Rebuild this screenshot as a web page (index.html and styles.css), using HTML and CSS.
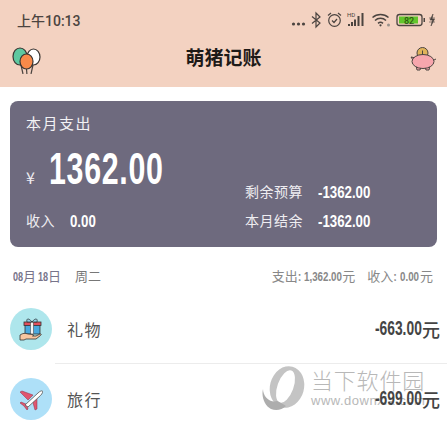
FILE: index.html

```html
<!DOCTYPE html>
<html>
<head>
<meta name="viewport" content="width=device-width, initial-scale=1.0">
<title>萌猪记账</title>
<link rel="stylesheet" href="styles.css">
</head>
<body>
<div class="top_area">
	<div class="status_bar">
		<span class="status_time">上午10:13</span>
		<svg class="status_icons" width="146" height="18" viewBox="0 0 146 18">
			<g fill="#4b4440">
				<circle cx="2.500" cy="13" r="1.600"/><circle cx="7.500" cy="13" r="1.600"/><circle cx="12.500" cy="13" r="1.600"/>
			</g>
			<path d="M21 5.500L29 12l-4 4V2l4 4-8 6.500" fill="none" stroke="#4b4440" stroke-width="1.200"/>
			<g fill="none" stroke="#4b4440" stroke-width="1.200">
				<circle cx="43.500" cy="9.500" r="5.800"/>
				<path d="M41 9.500l2 2 3-3.500M37 4.500l3-2.500M50 4.500l-3-2.500"/>
			</g>
			<text x="56" y="6" class="hd_text">HD</text>
			<g fill="#4b4440">
				<rect x="57" y="13" width="2" height="2"/><rect x="60" y="11" width="2" height="4"/>
				<rect x="63" y="8.500" width="2" height="6.500"/><rect x="66.500" y="5" width="2" height="10"/>
				<rect x="70.500" y="2" width="2" height="13"/>
			</g>
			<g fill="none" stroke="#4b4440" stroke-width="1.500">
				<path d="M81.500 6.500a12 12 0 0 1 16 0M84 9.500a8 8 0 0 1 11 0M87 12.300a4 4 0 0 1 5 0"/>
			</g>
			<circle cx="89.500" cy="14.300" r="1.100" fill="#4b4440"/>
			<circle cx="97.500" cy="14" r="1.500" fill="#9a928c"/>
			<rect x="106" y="3.500" width="25" height="11" rx="2.500" fill="none" stroke="#4b4440" stroke-width="1.300"/>
			<rect x="108" y="5.500" width="19" height="7" fill="#62c52c"/>
			<text x="118" y="12.500" class="batt_text">82</text>
			<rect x="132.500" y="7" width="1.500" height="4" fill="#4b4440"/>
			<path d="M142 3l-3 6h2.500l-1.500 6 3.500-7H141z M138 7h6M138 11h6" fill="#4b4440" stroke="#4b4440" stroke-width=".6"/>
		</svg>
	</div>
	<div class="title_bar">
		<svg width="32" height="32" viewBox="0 0 32 32">
			<g fill="none" stroke="#4b4440" stroke-width="1.200">
				<path d="M11 23l2 9M23 23l-2 9M16.500 27l.5 6"/>
			</g>
			<ellipse cx="10" cy="14.500" rx="7" ry="8.500" fill="#5ec8a0" stroke="#3a3532" stroke-width="1.200"/>
			<ellipse cx="23.500" cy="15" rx="6.500" ry="8" fill="#fff" stroke="#3a3532" stroke-width="1.200"/>
			<ellipse cx="16.500" cy="19.500" rx="6.500" ry="7.500" fill="#f98a4a" stroke="#3a3532" stroke-width="1.200"/>
		</svg>
		<span class="app_title">萌猪记账</span>
		<svg width="32" height="32" viewBox="0 0 32 32">
			<circle cx="17.500" cy="11" r="5.500" fill="#e0b35a" stroke="#4b4440" stroke-width="1"/>
			<path d="M17.500 8.500v5" stroke="#4b4440" stroke-width="1"/>
			<path d="M11 23l1 5h3l1-3h4l1 3h3l1-5z" fill="#f7a6ad" stroke="#4b4440" stroke-width="1"/>
			<path d="M8 18l-2-3 5 1z" fill="#f7a6ad" stroke="#4b4440" stroke-width="1"/>
			<ellipse cx="18" cy="19.500" rx="11" ry="7" fill="#f7a6ad" stroke="#4b4440" stroke-width="1"/>
			<path d="M29 18l2-1" stroke="#4b4440" stroke-width="1"/>
		</svg>
	</div>
</div>

<div class="month_card">
	<div class="card_title">本月支出</div>
	<div class="card_middle">
		<div class="amount_box">
			<span class="yen">¥</span>
			<span class="cond amount">1362.00</span>
		</div>
		<div class="budget_line">
			<span class="card_label">剩余预算</span>
			<span class="cond card_num wide_num">-1362.00</span>
		</div>
	</div>
	<div class="card_bottom">
		<div class="budget_line">
			<span class="card_label">收入</span>
			<span class="cond card_num">0.00</span>
		</div>
		<div class="budget_line">
			<span class="card_label">本月结余</span>
			<span class="cond card_num wide_num">-1362.00</span>
		</div>
	</div>
</div>

<div class="day_header">
	<div class="day_left">
		<span><span class="cond date_num">08</span>月<span class="cond date_num day_gap">18</span>日</span>
		<span class="week_day">周二</span>
	</div>
	<div class="day_right">
		<span>支出:<span class="cond day_num total_num">1,362.00</span>元</span>
		<span>收入:<span class="cond day_num">0.00</span>元</span>
	</div>
</div>

<div class="bill_row">
	<div class="bill_icon icon_gift">
		<svg width="24" height="24" viewBox="0 0 24 24">
			<rect x="6" y="7" width="15" height="10" fill="#49a9df" stroke="#333" stroke-width=".8"/>
			<rect x="5" y="5" width="17" height="3.500" fill="#e2505e" stroke="#333" stroke-width=".8"/>
			<rect x="11.500" y="5" width="3" height="12" fill="#f4f4f4" stroke="#333" stroke-width=".5"/>
			<path d="M13 5C10 1 7 1 8 5zM13 5c3-4 6-4 5 0z" fill="#8fd3ee" stroke="#333" stroke-width=".8"/>
			<path d="M1 18c3-2 5-2 8-1l5 .5c1 .5 .5 1.500-.5 1.500H17l4-2c1.500-.5 1.500 1 .5 1.500L17 22H7l-2 1H1z" fill="#f7c6a0" stroke="#333" stroke-width=".8"/>
		</svg>
	</div>
	<div class="bill_body">
		<span class="bill_name">礼物</span>
		<span class="bill_money"><span class="cond money_num">-663.00</span>元</span>
	</div>
</div>
<div class="bill_row">
	<div class="bill_icon icon_travel">
		<svg width="24" height="24" viewBox="0 0 24 24">
			<path d="M1 5l2-1 11 4-5 5zM18 22l-2 1-3-11 5-3z" fill="#e0566f" stroke="#8a3045" stroke-width=".5"/>
			<path d="M1 16l1-1 5 2 1 1 1 4-1 1-3-4z" fill="#e0566f" stroke="#8a3045" stroke-width=".5"/>
			<path d="M6 18L19 6c2-2 4-2.500 4.500-2s0 2.500-2 4.500L9 20z" fill="#fff" stroke="#555" stroke-width=".8"/>
		</svg>
	</div>
	<div class="bill_body">
		<span class="bill_name">旅行</span>
		<span class="bill_money"><span class="cond money_num">-699.00</span>元</span>
	</div>
</div>

<div class="watermark">
	<svg width="44" height="46" viewBox="0 0 44 46">
		<ellipse cx="25" cy="21" rx="17" ry="21" transform="rotate(15 25 21)" fill="#c4c4c4"/>
		<ellipse cx="23.500" cy="20.500" rx="8" ry="17" transform="rotate(20 23.500 20.500)" fill="#fff"/>
		<path d="M1 23c0 8 7 14 14 12 3 1 6 3 9 5-4 4-10 5-15 3C3 40-1 31 1 23z" fill="#adadad"/>
	</svg>
	<div class="wm_text">
		<div class="wm_name">当下软件园</div>
		<div class="wm_url">www.downxia.com</div>
	</div>
</div>
</body>
</html>
```

FILE: styles.css

```css
html, body {
	margin: 0;
	padding: 0;
}

body {
	position: relative;
	width: 447px;
	height: 432px;
	overflow: hidden;
	background-color: #fff;
	font-family: "Noto Sans CJK SC", "Noto Sans", sans-serif;
}

/* no condensed font here, so numbers get squeezed and their box set by hand */
.cond {
	display: inline-block;
	flex-shrink: 0;
	font-family: "Liberation Sans", sans-serif;
	font-weight: 700;
	white-space: nowrap;
	transform-origin: left center;
}

.top_area {
	height: 87px;
	background-color: #f3d2c1;
}

.status_bar {
	display: flex;
	justify-content: space-between;
	align-items: center;
	height: 40px;
	padding: 0 10px 0 17px;
}

.status_time {
	margin-bottom: 1px;
	font-family: Roboto, "Noto Sans CJK SC", sans-serif;
	font-size: 14px;
	font-weight: 500;
	color: #4b4440;
}

.hd_text {
	font-family: Roboto, sans-serif;
	font-size: 6px;
	fill: #4b4440;
}

.batt_text {
	font-family: Roboto, sans-serif;
	font-size: 9px;
	font-weight: 500;
	text-anchor: middle;
	fill: #2d5a10;
}

.title_bar {
	display: flex;
	justify-content: space-between;
	align-items: center;
	height: 36px;
	padding: 0 10px;
}

.app_title {
	margin-bottom: 3px;
	font-size: 19px;
	font-weight: 700;
	color: #1e1a18;
}

.month_card {
	display: flex;
	flex-direction: column;
	height: 146px;
	box-sizing: border-box;
	margin: 14px 10px 0;
	padding: 11px 67px 0 16px;
	background-color: #6e6a7e;
	border-radius: 8px;
	color: #fff;
}

.card_title {
	font-size: 15px;
	line-height: 22px;
	letter-spacing: 1.500px;
	color: #f2f1f4;
}

.card_middle, .card_bottom {
	display: flex;
	justify-content: space-between;
	align-items: flex-end;
}

.card_middle {
	height: 70px;
}

.card_bottom {
	margin-top: 7px;
}

.amount_box {
	display: flex;
	align-items: baseline;
	gap: 14px;
	align-self: flex-start;
	margin-top: 10px;
}

.yen {
	font-size: 16px;
	color: #eeedf1;
}

.amount {
	width: 113px;
	font-size: 44px;
	line-height: 50px;
	letter-spacing: 1px;
	transform: scaleX(.69);
}

.budget_line {
	display: flex;
	align-items: center;
	gap: 15px;
	line-height: 22px;
}

.card_label {
	margin-bottom: 4px;
	font-size: 14px;
	line-height: 18px;
	letter-spacing: .5px;
	color: #eeedf1;
}

.card_num {
	width: 26px;
	font-size: 17px;
	transform: scaleX(.78);
}

.wide_num {
	width: 52px;
}

.day_header {
	display: flex;
	justify-content: space-between;
	align-items: center;
	height: 20px;
	margin-top: 18px;
	padding: 0 14px 0 13px;
	font-size: 13px;
}

.day_left, .day_right {
	display: flex;
	align-items: center;
}

.day_left {
	gap: 14px;
	color: #77748a;
}

.day_right {
	gap: 12px;
	color: #888;
}

.date_num {
	width: 10px;
	font-size: 13px;
	transform: scaleX(.7);
}

.day_gap {
	margin-left: 2px;
}

.week_day {
	color: #777;
}

.day_num {
	width: 20px;
	margin-left: 3px;
	font-size: 13px;
	transform: scaleX(.75);
}

.total_num {
	width: 38px;
}

.bill_row {
	display: flex;
	align-items: center;
	height: 70px;
	padding-left: 10px;
}

.day_header + .bill_row {
	margin-top: 9px;
}

.bill_icon {
	display: flex;
	justify-content: center;
	align-items: center;
	flex-shrink: 0;
	width: 42px;
	height: 42px;
	border-radius: 50%;
}

.icon_gift {
	background-color: #aee6ec;
}

.icon_travel {
	background-color: #aee0f8;
}

.bill_body {
	display: flex;
	justify-content: space-between;
	align-items: center;
	flex: 1;
	align-self: stretch;
	margin-left: 3px;
	padding: 0 7px 0 12px;
	border-bottom: 1px solid #ececec;
}

.bill_row:last-of-type .bill_body {
	border-bottom: none;
}

.bill_name {
	font-size: 16px;
	letter-spacing: 1.500px;
	color: #555;
}

.bill_money {
	display: flex;
	align-items: center;
	font-size: 18px;
	font-weight: 500;
	color: #444;
}

.money_num {
	width: 47px;
	font-size: 20px;
	transform: scaleX(.69);
}

.watermark {
	position: absolute;
	left: 262px;
	top: 366px;
	z-index: -1;
	display: flex;
	gap: 5px;
	color: #b8b8b8;
}

.wm_name {
	font-size: 22px;
	line-height: 26px;
	letter-spacing: .8px;
	font-weight: 300;
}

.wm_url {
	font-family: "Liberation Sans", sans-serif;
	font-size: 13px;
	line-height: 18px;
	letter-spacing: .5px;
	white-space: nowrap;
}
```
